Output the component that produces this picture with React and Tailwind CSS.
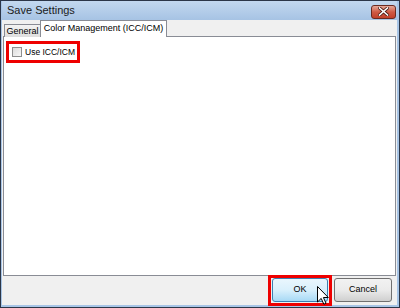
export default function App() {
  return (
    <div
      className="relative w-[400px] h-[308px] border border-[#2c3648] bg-[#a8c5e6] flex flex-col pl-px pr-[2px] pb-[2px] select-none"
      style={{ fontFamily: '"Liberation Sans", Arial, sans-serif' }}
    >
      {/* Title bar */}
      <div className="h-[19px] shrink-0 flex items-center justify-between pl-[5px] pr-[1px] bg-gradient-to-b from-[#c3d8ef] to-[#a6c3e4]">
        <span className="text-[11px] text-[#1b1b1b] leading-none">Save Settings</span>
        <div className="w-[25px] h-[14px] mt-[2px] rounded-[3px] border border-[#6b2a20] bg-gradient-to-b from-[#e4a899] via-[#cf5a45] to-[#c2402a] flex items-center justify-center">
          <svg width="11" height="9" viewBox="0 0 11 9">
            <path d="M1.5 1 L9.5 8 M9.5 1 L1.5 8" stroke="#4a1a14" strokeWidth="3.2" strokeLinecap="square" />
            <path d="M1.5 1 L9.5 8 M9.5 1 L1.5 8" stroke="#ffffff" strokeWidth="1.6" strokeLinecap="square" />
          </svg>
        </div>
      </div>

      {/* Body */}
      <div className="flex-1 bg-[#f0f0f0] flex flex-col px-px pb-[3px]">
        {/* Tabs */}
        <div className="h-[17px] flex items-end pl-px relative z-10">
          <div className="h-[13px] w-[37px] border border-b-0 border-[#898c95] bg-gradient-to-b from-[#f3f3f3] to-[#dedede] flex items-center justify-center">
            <span className="text-[9px] leading-none text-black mt-px">General</span>
          </div>
          <div className="h-[17px] w-[127px] -ml-px border border-b-0 border-[#898c95] bg-white flex items-start justify-center pt-[3px]">
            <span className="text-[9px] leading-none text-black">Color Management (ICC/ICM)</span>
          </div>
        </div>

        {/* Panel */}
        <div className="h-[240px] -mt-px border border-[#898c95] bg-white px-[8px] pt-[10px]">
          <div className="flex items-center gap-[3px]">
            <div className="w-[10px] h-[10px] border border-[#8e8f8f] bg-gradient-to-br from-[#dcdcdc] to-[#f8f8f8]" />
            <span className="text-[8.5px] leading-none text-black">Use ICC/ICM</span>
          </div>
        </div>

        {/* Buttons */}
        <div className="mt-[2px] h-[24px] flex justify-end gap-[6px] pr-[4px]">
          <button className="w-[56px] h-[24px] rounded-[3px] border border-[#3c7fb1] bg-gradient-to-b from-[#eaf6fd] via-[#d9f0fc] to-[#a7d9f5] text-[9px] text-black">
            OK
          </button>
          <button className="w-[58px] h-[24px] rounded-[3px] border border-[#707070] bg-gradient-to-b from-[#f2f2f2] via-[#ebebeb] to-[#cfcfcf] text-[9px] text-black">
            Cancel
          </button>
        </div>
      </div>

      {/* Annotation boxes */}
      <div className="absolute left-[5px] top-[40px] w-[74px] h-[22px] border-[3px] border-[#ee0000] pointer-events-none" />
      <div className="absolute left-[267px] top-[274px] w-[64px] h-[31px] border-[3px] border-[#ee0000] pointer-events-none" />

      {/* Mouse cursor */}
      <svg className="absolute left-[316px] top-[285px]" width="12" height="19" viewBox="0 0 12 19">
        <path d="M0.5 0.5 L0.5 16 L4.2 12.4 L6.8 18.2 L9 17.2 L6.4 11.5 L11.3 11.5 Z" fill="#ffffff" stroke="#000000" strokeWidth="1" strokeLinejoin="miter" />
      </svg>
    </div>
  );
}
